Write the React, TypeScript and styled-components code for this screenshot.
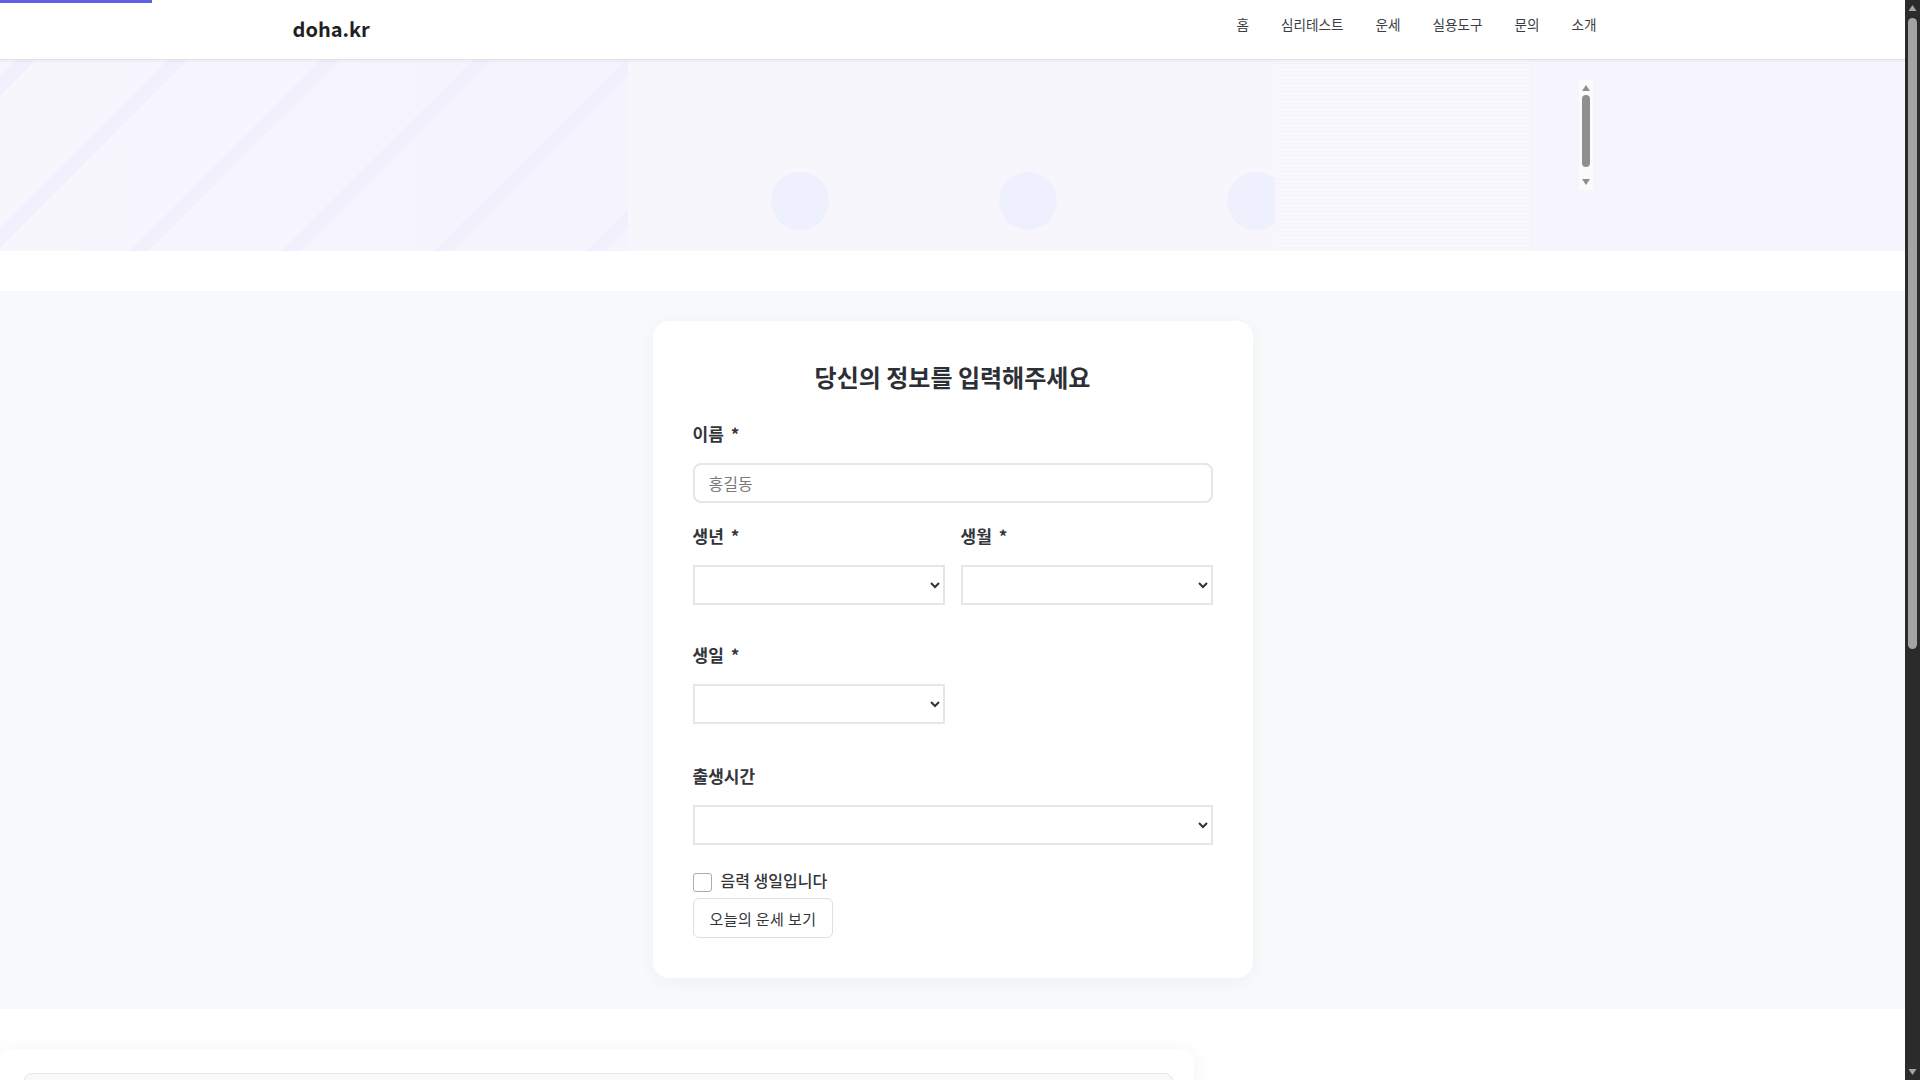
import React from "react";
import styled, { createGlobalStyle } from "styled-components";

const GlobalStyle = createGlobalStyle`
  html, body { margin: 0; height: 100%; overflow: hidden; }
  body {
    background: #ffffff;
    font-family: "Noto Sans CJK KR", "Noto Sans", sans-serif;
    color: #333;
  }
  * { box-sizing: border-box; }
`;

const Frame = styled.div`
  display: flex;
  height: 100vh;
  overflow: hidden;
`;

const Page = styled.div`
  flex: 1;
  min-width: 0;
  position: relative;
  overflow: hidden;
`;

const ScrollRail = styled.div`
  width: 15px;
  flex: none;
  background: #2b2b2b;
  display: flex;
  flex-direction: column;
`;

const RailButton = styled.div`
  height: 15px;
  flex: none;
  display: flex;
  align-items: center;
  justify-content: center;
`;

const RailTrack = styled.div`
  flex: 1;
  display: flex;
  flex-direction: column;
  padding: 3px;
`;

const RailThumb = styled.div`
  height: 631px;
  border-radius: 5px;
  background: #a3a3a3;
`;

const ProgressBar = styled.div`
  position: absolute;
  top: 0;
  left: 0;
  width: 152px;
  height: 3px;
  background: #6161e6;
  z-index: 10;
`;

const Header = styled.header`
  height: 59px;
  background: #fff;
  box-shadow: 0 1px 0 #e2e2e6, 0 2px 4px rgba(0, 0, 0, 0.05);
  position: relative;
  z-index: 2;
`;

const HeaderInner = styled.div`
  width: 1320px;
  height: 100%;
  margin: 0 auto;
  display: flex;
  justify-content: space-between;
`;

const Logo = styled.a`
  margin-top: 15px;
  font-size: 20px;
  line-height: 28px;
  font-weight: 700;
  color: #1f1f24;
  text-decoration: none;
`;

const Nav = styled.nav`
  display: flex;
  align-items: flex-start;
  padding-top: 12px;
`;

const NavLink = styled.a`
  padding: 0 16px;
  font-size: 13.6px;
  line-height: 24px;
  color: #3d3d45;
  text-decoration: none;
`;

const Hero = styled.section`
  position: relative;
  height: 192px;
  display: flex;
  background: #f6f4fd;
  overflow: hidden;
`;

const StripePanel = styled.div`
  width: 628px;
  flex: none;
  background:
    repeating-linear-gradient(
      135deg,
      rgba(243, 241, 253, 0) 0px,
      rgba(243, 241, 253, 0) 12px,
      #f2f0fc 12px,
      #f2f0fc 26px,
      rgba(243, 241, 253, 0) 26px,
      rgba(243, 241, 253, 0) 107.5px
    ),
    linear-gradient(90deg, #f7f6fd 0%, #f5f3fd 100%);
`;

const CirclePanel = styled.div`
  width: 647px;
  flex: none;
  display: flex;
  align-items: flex-end;
  gap: 170px;
  padding: 0 0 21px 143px;
  overflow: hidden;
  background: #f7f6fc;
`;

const Circle = styled.div`
  width: 58px;
  height: 58px;
  flex: none;
  border-radius: 50%;
  background: #eef1fd;
`;

const LinePanel = styled.div`
  width: 257px;
  flex: none;
  background:
    repeating-linear-gradient(
      180deg,
      rgba(242, 240, 250, 0.45) 0px,
      rgba(242, 240, 250, 0.45) 1px,
      rgba(249, 248, 253, 0) 1px,
      rgba(249, 248, 253, 0) 4px
    ),
    #f8f7fc;
  border-right: 1px solid #f3f1fa;
`;

const PlainPanel = styled.div`
  flex: 1;
  background: #f6f4fd;
`;

const MiniScroll = styled.div`
  position: absolute;
  top: 21px;
  left: calc(50% + 626px);
  width: 14px;
  height: 110px;
  background: #fbfbfb;
  display: flex;
  flex-direction: column;
  align-items: center;
  padding: 5px 0;
  gap: 4px;
`;

const MiniArrow = styled.div<{ $down?: boolean }>`
  width: 0;
  height: 0;
  border-left: 4px solid transparent;
  border-right: 4px solid transparent;
  ${(p) => (p.$down ? "border-top: 6px solid #8f8f8f;" : "border-bottom: 6px solid #8f8f8f;")}
`;

const MiniThumb = styled.div`
  width: 8px;
  flex: 1;
  border-radius: 4px;
  background: #8f8f8f;
  margin-bottom: 8px;
`;

const Gap = styled.div`
  height: 40px;
  background: #fff;
`;

const FormSection = styled.section`
  background: #f8f9fb;
  padding: 30px 0 31px;
`;

const Card = styled.div`
  width: 600px;
  margin: 0 auto;
  background: #fff;
  border-radius: 16px;
  padding: 40px;
  box-shadow: 0 4px 18px rgba(20, 20, 60, 0.04);
`;

const Title = styled.h2`
  margin: 0 0 29px;
  font-size: 24px;
  line-height: 32px;
  font-weight: 700;
  color: #2d2f36;
  text-align: center;
`;

const Field = styled.div<{ $mb?: number; $half?: boolean }>`
  margin-bottom: ${(p) => p.$mb ?? 0}px;
  width: ${(p) => (p.$half ? "252px" : "auto")};
`;

const Row = styled.div`
  display: grid;
  grid-template-columns: 1fr 1fr;
  gap: 16px;
  margin-bottom: 38px;
`;

const Label = styled.label`
  display: block;
  font-size: 17px;
  line-height: 24px;
  font-weight: 700;
  color: #33353b;
  margin-bottom: 17px;
`;

const Req = styled.span`
  margin-left: 3px;
`;

const TextInput = styled.input`
  display: block;
  width: 100%;
  height: 40px;
  border: 2px solid #e4e6ea;
  border-radius: 8px;
  padding: 0 14px;
  font-family: inherit;
  font-size: 16px;
  color: #333;
  background: #fff;
  outline: none;
  &::placeholder { color: #7a7a7a; }
`;

const Select = styled.select`
  display: block;
  width: 100%;
  height: 40px;
  border: 2px solid #e4e6ea;
  border-radius: 0;
  background: #fff;
  font-family: inherit;
  font-size: 15px;
  color: #333;
  padding: 0 8px;
  outline: none;
`;

const CheckRow = styled.label`
  display: flex;
  align-items: center;
  gap: 9px;
  height: 20px;
  margin-bottom: 7px;
  font-size: 16px;
  line-height: 20px;
  font-weight: 500;
  color: #33353b;
`;

const CheckText = styled.span`
  margin-top: -3px;
`;

const Check = styled.input`
  appearance: none;
  margin: 2px 0 0;
  width: 19px;
  height: 19px;
  border: 1.5px solid #a8acb3;
  border-radius: 3px;
  background: #fff;
`;

const Button = styled.button`
  display: block;
  height: 40px;
  padding: 0 16px;
  border: 1px solid #dcdfe4;
  border-radius: 6px;
  background: #fff;
  font-family: inherit;
  font-size: 15px;
  letter-spacing: 0.4px;
  color: #33353b;
  cursor: pointer;
`;

const LowerSection = styled.section`
  background: #fff;
  padding: 40px 0 80px;
`;

const LowerCard = styled.div`
  width: 1194px;
  background: #fff;
  border-radius: 12px;
  padding: 24px 21px 24px 24px;
  box-shadow: 0 2px 22px rgba(0, 0, 0, 0.05);
`;

const LowerBox = styled.div`
  height: 600px;
  border: 1px solid #e4e6ea;
  border-radius: 8px;
  background: #f8f9fb;
`;

const navItems = ["홈", "심리테스트", "운세", "실용도구", "문의", "소개"];

const Triangle = ({ down }: { down?: boolean }) => (
  <svg width="15" height="15" viewBox="0 0 15 15">
    <polygon points={down ? "3.5,4 11.5,4 7.5,10" : "3.5,11 11.5,11 7.5,5"} fill="#a3a3a3" />
  </svg>
);

export default function App() {
  return (
    <>
      <GlobalStyle />
      <Frame>
        <Page>
          <ProgressBar />
          <Header>
            <HeaderInner>
              <Logo href="#">doha.kr</Logo>
              <Nav>
                {navItems.map((n) => (
                  <NavLink key={n} href="#">
                    {n}
                  </NavLink>
                ))}
              </Nav>
            </HeaderInner>
          </Header>
          <Hero>
            <StripePanel />
            <CirclePanel>
              <Circle />
              <Circle />
              <Circle />
            </CirclePanel>
            <LinePanel />
            <PlainPanel />
            <MiniScroll>
              <MiniArrow />
              <MiniThumb />
              <MiniArrow $down />
            </MiniScroll>
          </Hero>
          <Gap />
          <FormSection>
            <Card>
              <Title>당신의 정보를 입력해주세요</Title>
              <Field $mb={21}>
                <Label>
                  이름 <Req>*</Req>
                </Label>
                <TextInput placeholder="홍길동" />
              </Field>
              <Row>
                <Field>
                  <Label>
                    생년 <Req>*</Req>
                  </Label>
                  <Select defaultValue="">
                    <option value=""></option>
                  </Select>
                </Field>
                <Field>
                  <Label>
                    생월 <Req>*</Req>
                  </Label>
                  <Select defaultValue="">
                    <option value=""></option>
                  </Select>
                </Field>
              </Row>
              <Field $mb={40} $half>
                <Label>
                  생일 <Req>*</Req>
                </Label>
                <Select defaultValue="">
                  <option value=""></option>
                </Select>
              </Field>
              <Field $mb={26}>
                <Label>출생시간</Label>
                <Select defaultValue="">
                  <option value=""></option>
                </Select>
              </Field>
              <CheckRow>
                <Check type="checkbox" />
                <CheckText>음력 생일입니다</CheckText>
              </CheckRow>
              <Button>오늘의 운세 보기</Button>
            </Card>
          </FormSection>
          <LowerSection>
            <LowerCard>
              <LowerBox />
            </LowerCard>
          </LowerSection>
        </Page>
        <ScrollRail>
          <RailButton>
            <Triangle />
          </RailButton>
          <RailTrack>
            <RailThumb />
          </RailTrack>
          <RailButton>
            <Triangle down />
          </RailButton>
        </ScrollRail>
      </Frame>
    </>
  );
}
